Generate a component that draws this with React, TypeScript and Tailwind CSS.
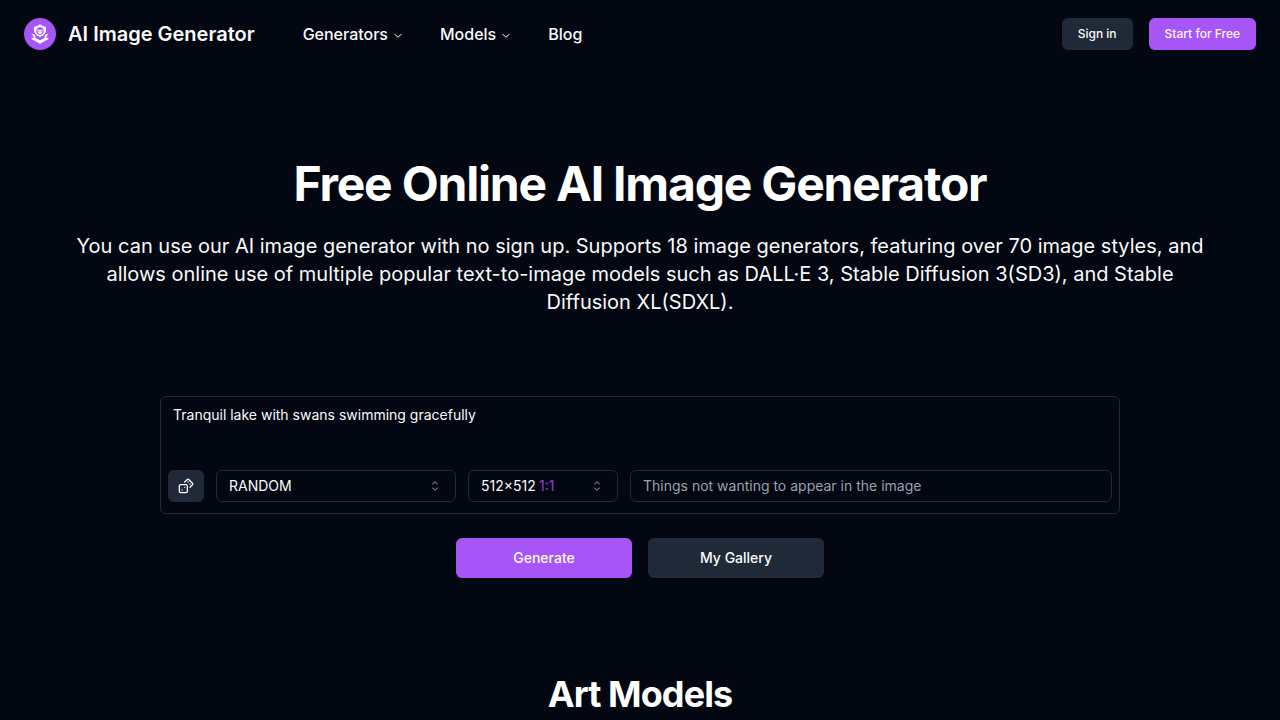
import React, { useState } from 'react';
import { Dices } from 'lucide-react';

const styles = ['RANDOM', 'ANIME', 'CINEMATIC', 'WATERCOLOR', 'PIXEL ART'];

const sizes = [
  { value: '512×512', ratio: '1:1' },
  { value: '512×768', ratio: '2:3' },
  { value: '768×512', ratio: '3:2' },
];

const prompts = [
  'Tranquil lake with swans swimming gracefully',
  'Ancient temple hidden in a misty forest',
  'Neon city street on a rainy night',
];

function Logo() {
  return (
    <svg viewBox="0 0 96 96" className="size-8 shrink-0" aria-hidden="true">
      <circle cx="48" cy="48" r="48" fill="#a855f7" />
      {/* Shield with a face */}
      <path fill="#fff" d="M48 19l10 6l8 2v14l-7 10l-11 6l-11-6l-7-10V27l8-2z" />
      <circle cx="48" cy="39" r="11" fill="#a855f7" />
      <path fill="#fff" d="M41 34l7 3l7-3v8l-4 5h-6l-4-5z" />
      <circle cx="44" cy="40" r="2" fill="#a855f7" />
      <circle cx="52" cy="40" r="2" fill="#a855f7" />
      {/* Layers */}
      <path fill="#fff" d="M23 48l7 1l6 8l-5 2zM73 48l-7 1l-6 8l5 2z" />
      <path fill="#fff" d="M21 62l9-4l18 9l18-9l9 4l-27 15z" />
    </svg>
  );
}

function ChevronDown() {
  return (
    <svg viewBox="0 0 15 15" className="size-3 mt-0.5" fill="currentColor" aria-hidden="true">
      <path d="M3.13523 6.15803C3.3241 5.95657 3.64052 5.94637 3.84197 6.13523L7.5 9.56464L11.158 6.13523C11.3595 5.94637 11.6759 5.95657 11.8648 6.15803C12.0536 6.35949 12.0434 6.67591 11.842 6.86477L7.84197 10.6148C7.64964 10.7951 7.35036 10.7951 7.15803 10.6148L3.15803 6.86477C2.95657 6.67591 2.94637 6.35949 3.13523 6.15803Z" />
    </svg>
  );
}

function CaretSort() {
  return (
    <svg
      viewBox="0 0 15 15"
      className="col-start-1 row-start-1 size-4 mr-[13px] self-center justify-self-end opacity-50 pointer-events-none"
      fill="currentColor"
      aria-hidden="true"
    >
      <path d="M4.93179 5.43179C4.75605 5.60753 4.75605 5.89245 4.93179 6.06819C5.10753 6.24392 5.39245 6.24392 5.56819 6.06819L7.49999 4.13638L9.43179 6.06819C9.60753 6.24392 9.89245 6.24392 10.0682 6.06819C10.2439 5.89245 10.2439 5.60753 10.0682 5.43179L7.81819 3.18179C7.73379 3.0974 7.61933 3.04999 7.49999 3.04999C7.38064 3.04999 7.26618 3.0974 7.18179 3.18179L4.93179 5.43179ZM10.0682 9.56819C10.2439 9.39245 10.2439 9.10753 10.0682 8.93179C9.89245 8.75606 9.60753 8.75606 9.43179 8.93179L7.49999 10.8636L5.56819 8.93179C5.39245 8.75606 5.10753 8.75606 4.93179 8.93179C4.75605 9.10753 4.75605 9.39245 4.93179 9.56819L7.18179 11.8182C7.35753 11.9939 7.64245 11.9939 7.81819 11.8182L10.0682 9.56819Z" />
    </svg>
  );
}

export default function App() {
  const [promptIndex, setPromptIndex] = useState(0);
  const [prompt, setPrompt] = useState(prompts[0]);
  const [style, setStyle] = useState(styles[0]);
  const [size, setSize] = useState(sizes[0].value);
  const [negative, setNegative] = useState('');

  const ratio = sizes.find((s) => s.value === size)?.ratio;

  const shufflePrompt = () => {
    const next = (promptIndex + 1) % prompts.length;
    setPromptIndex(next);
    setPrompt(prompts[next]);
  };

  return (
    <div className="min-h-screen bg-[#030711] text-gray-50 font-[Inter,sans-serif]">
      {/* Header */}
      <header className="flex items-center justify-between px-6 py-4">
        <div className="flex items-center gap-12">
          <a href="/" className="flex items-center gap-3 text-xl font-semibold">
            <Logo />
            AI Image Generator
          </a>
          <nav className="flex items-center gap-9 font-medium">
            <button type="button" className="flex items-center gap-1">
              Generators
              <ChevronDown />
            </button>
            <button type="button" className="flex items-center gap-1">
              Models
              <ChevronDown />
            </button>
            <a href="/blog">Blog</a>
          </nav>
        </div>
        <div className="flex items-center gap-4 py-0.5 text-xs font-medium">
          <button type="button" className="h-8 px-4 rounded-md bg-[#1f2937] hover:bg-gray-700">
            Sign in
          </button>
          <button type="button" className="h-8 px-4 rounded-md bg-[#a855f7] hover:bg-purple-600">
            Start for Free
          </button>
        </div>
      </header>

      <main className="px-16 pt-20">
        {/* Hero */}
        <section className="pt-3 text-center">
          <h1 className="text-5xl leading-12 font-bold tracking-tight text-white">
            Free Online AI Image Generator
          </h1>
          <p className="mt-6 text-xl">
            You can use our AI image generator with no sign up. Supports 18 image generators,
            featuring over 70 image styles, and allows online use of multiple popular text-to-image
            models such as DALL·E 3, Stable Diffusion 3(SD3), and Stable Diffusion XL(SDXL).
          </p>
        </section>

        {/* Generator */}
        <form className="max-w-[960px] mx-auto mt-20 text-sm" onSubmit={(e) => e.preventDefault()}>
          <div className="rounded-md border border-[#1f2937] pb-[11px]">
            <textarea
              aria-label="Prompt"
              value={prompt}
              onChange={(e) => setPrompt(e.target.value)}
              className="block w-full h-[73px] px-3 py-2 resize-none bg-transparent focus:outline-none"
            />
            <div className="flex items-center gap-3 px-[7px]">
              <button
                type="button"
                aria-label="Random prompt"
                onClick={shufflePrompt}
                className="flex items-center justify-center w-9 h-8 shrink-0 rounded-md bg-[#1f2937] hover:bg-gray-700"
              >
                <Dices className="size-4" />
              </button>
              <div className="grid w-60">
                <select
                  aria-label="Style"
                  value={style}
                  onChange={(e) => setStyle(e.target.value)}
                  className="col-start-1 row-start-1 h-8 px-3 appearance-none rounded-md border border-[#1f2937] bg-[#030711]"
                >
                  {styles.map((s) => (
                    <option key={s}>{s}</option>
                  ))}
                </select>
                <CaretSort />
              </div>
              <div className="grid w-[150px]">
                <select
                  aria-label="Image size"
                  value={size}
                  onChange={(e) => setSize(e.target.value)}
                  className="col-start-1 row-start-1 h-8 px-3 appearance-none rounded-md border border-[#1f2937] bg-[#030711]"
                >
                  {sizes.map((s) => (
                    <option key={s.value}>{s.value}</option>
                  ))}
                </select>
                <span className="col-start-1 row-start-1 self-center ml-[71px] text-[#a855f7] opacity-80 pointer-events-none">
                  {ratio}
                </span>
                <CaretSort />
              </div>
              <input
                type="text"
                aria-label="Negative prompt"
                placeholder="Things not wanting to appear in the image"
                value={negative}
                onChange={(e) => setNegative(e.target.value)}
                className="flex-1 min-w-0 h-8 px-3 pb-0.5 rounded-md border border-[#1f2937] bg-transparent placeholder:text-gray-400 focus:outline-none"
              />
            </div>
          </div>

          <div className="flex justify-center gap-4 mt-6 font-medium">
            <button type="submit" className="w-44 h-10 rounded-md bg-[#a855f7] hover:bg-purple-600">
              Generate
            </button>
            <button type="button" className="w-44 h-10 rounded-md bg-[#1f2937] hover:bg-gray-700">
              My Gallery
            </button>
          </div>
        </form>

        {/* Art models */}
        <section className="pt-24 text-center">
          <h2 className="text-4xl font-bold tracking-tight text-white">Art Models</h2>
        </section>
      </main>
    </div>
  );
}
